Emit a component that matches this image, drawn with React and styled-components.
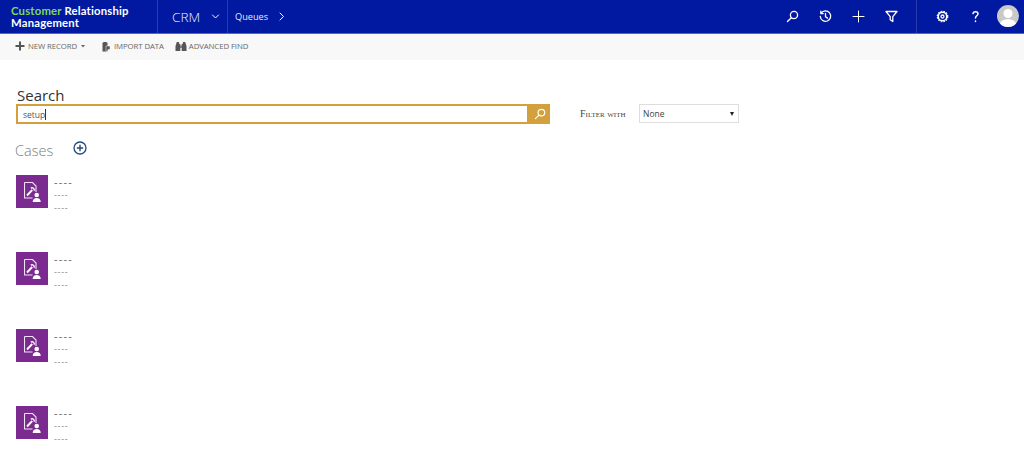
import React from "react";
import styled, { createGlobalStyle } from "styled-components";

const Global = createGlobalStyle`
  html, body { margin: 0; padding: 0; background: #fff; }
  body { font-family: "Open Sans", "Noto Sans", sans-serif; overflow: hidden; }
`;
const Page = styled.div`
  width: 1024px; height: 460px; overflow: hidden; display: flex; flex-direction: column;
`;
const NavBar = styled.header`
  height: 33px; flex: none; display: flex; align-items: stretch; background: #0019a0;
  border-bottom: 1px solid #5566c4; color: #fff;
`;
const Logo = styled.div`
  width: 146px; padding: 5px 0 0 11px; border-right: 1px solid #2a3bb0;
  font: 700 11.3px/11.5px "Lato", sans-serif; letter-spacing: 0.2px; white-space: nowrap; color: #fff;
`;
const LogoGreen = styled.span`color: #7ed957;`;
const AppSwitch = styled.div`
  width: 70px; display: flex; align-items: center; padding-left: 14px; box-sizing: border-box;
  gap: 11px; border-right: 1px solid #2a3bb0; font-size: 13.5px; font-weight: 300; color: #eef1fc;
`;
const Crumb = styled.div`
  display: flex; align-items: center; gap: 9px; padding-left: 7px; font-size: 9.2px; color: #e6eafa;
`;
const NavRight = styled.div`margin-left: auto; display: flex; align-items: center; height: 100%;`;
const NavGroup = styled.div`
  display: flex; align-items: center; height: 100%; gap: ${p => p.$gap}px; padding: ${p => p.$pad};
  border-right: ${p => p.$line ? "1px solid #2a3bb0" : "none"};
`;
const Avatar = styled.div`
  width: 22px; height: 22px; border-radius: 50%; background: #c9c9c9; overflow: hidden; margin: -1px 0 0 -5px;
`;
const Toolbar = styled.div`
  height: 26px; flex: none; background: #f8f8f8; display: flex; align-items: center; padding: 0 0 2px 15px;
  font-size: 7.8px; color: #666; box-sizing: border-box;
`;
const ToolItem = styled.div`
  display: flex; align-items: center; gap: ${p => p.$gap ?? 2}px; margin-right: ${p => p.$mr ?? 0}px;
  white-space: nowrap; letter-spacing: -0.1px; opacity: 0.99;
`;
const Main = styled.main`padding: 27px 0 0 16px; flex: 1;`;
const SearchTitle = styled.h1`
  margin: 0 0 0 1px; font-weight: 400; font-size: 15px; line-height: 16px; color: #333;
`;
const SearchRow = styled.div`display: flex; align-items: center; margin-top: 1px;`;
const SearchBox = styled.div`
  width: 513px; height: 20px; box-sizing: border-box; border: 2px solid #d2a03c; display: flex; align-items: center;
  padding-left: 5px; font-size: 8.5px; color: #555; background: #fff;
`;
const Caret = styled.span`width: 1px; height: 11px; background: #333;`;
const SearchButton = styled.div`
  width: 21px; height: 20px; background: #d2a03c; display: flex; align-items: center; justify-content: center;
`;
const FilterLabel = styled.span`
  margin: 0 0 1px 30px; width: 59px; font: 400 10px "Liberation Serif", serif; font-variant: small-caps; color: #444;
  white-space: nowrap;
`;
const SelectBox = styled.div`
  width: 100px; height: 19px; box-sizing: border-box; border: 1px solid #ddd; display: flex; align-items: center;
  justify-content: space-between; padding: 0 4px 0 3px; font-size: 8.5px; color: #444; margin-bottom: 1px;
`;
const Arrow = styled.span`
  width: 0; height: 0; border-left: 2.5px solid transparent; border-right: 2.5px solid transparent; border-top: 4px solid #222;
`;
const SectionHead = styled.div`display: flex; align-items: flex-start; margin: 15px 0 0 -1px; height: 36px;`;
const SectionTitle = styled.h2`
  margin: 1px 0 0; width: 58px; font-weight: 300; font-size: 14.5px; line-height: 22px; color: #7b7b7b;
`;
const PlusWrap = styled.div`margin-top: 2px; height: 15px; display: flex;`;
const Row = styled.div`display: flex; height: 77px; align-items: flex-start;`;
const Tile = styled.div`
  width: 32px; height: 33px; background: #7b2a90; display: flex; align-items: center; justify-content: center; flex: none;
`;
const Lines = styled.div`margin: -1px 0 0 6px; display: flex; flex-direction: column;`;
const Dash = styled.span`
  font-size: ${p => p.$big ? 11 : 9}px; line-height: ${p => p.$big ? 15 : 12.5}px; color: ${p => p.$big ? "#666" : "#888"};
  letter-spacing: ${p => p.$big ? 1.2 : 0.7}px;
`;

const White = { fill: "none", stroke: "#fff", strokeWidth: 1.3, strokeLinecap: "round", strokeLinejoin: "round" };

const SearchGlyph = ({ s = 13 }) => (
  <svg width={s} height={s} viewBox="0 0 13 13" {...White}>
    <circle cx="8" cy="5" r="3.6" /><path d="M5.3 7.7 1.5 11.5" />
  </svg>
);
const Chevron = ({ d }) => <svg width="9" height="9" viewBox="0 0 9 9" {...White} strokeWidth="1"><path d={d} /></svg>;
const CaseIcon = () => (
  <svg width="17" height="20" viewBox="0 0 17 20">
    <path d="M.5.5h8l3.500 3.500v6M.5.5v15.500h8" fill="none" stroke="#f0e4f3" strokeWidth="1.1" />
    <path d="M3 13.500 8.200 8" stroke="#fff" strokeWidth="1.9" />
    <path d="M6.800 6.200a2.200 2.200 0 0 1 3.300 2.600" stroke="#fff" strokeWidth="1.4" fill="none" />
    <circle cx="12.700" cy="13" r="2.300" fill="#fff" />
    <path d="M8.700 20c0-2.800 1.600-4 4-4s4 1.200 4 4z" fill="#fff" />
  </svg>
);
const Item = () => (
  <Row>
    <Tile><CaseIcon /></Tile>
    <Lines><Dash $big>----</Dash><Dash>----</Dash><Dash>----</Dash></Lines>
  </Row>
);

export default function App() {
  return (
    <Page>
      <Global />
      <NavBar>
        <Logo><LogoGreen>Customer</LogoGreen> Relationship<br />Management</Logo>
        <AppSwitch>CRM <Chevron d="M1.5 3 4.5 6 7.5 3" /></AppSwitch>
        <Crumb>Queues <Chevron d="M3 1 6.5 4.5 3 8" /></Crumb>
        <NavRight>
          <NavGroup $gap={20} $pad="0 18px 0 0" $line>
            <SearchGlyph />
            <svg width="13" height="13" viewBox="0 0 13 13" {...White}>
              <path d="M2.2 3.2A5.2 5.2 0 1 1 1.3 6.5M1.8 1.2v2.4h2.4M6.5 3.5v3.2l2 1.4" />
            </svg>
            <svg width="13" height="13" viewBox="0 0 13 13" {...White} strokeWidth="1"><path d="M6.5 1v11M1 6.5h11" /></svg>
            <svg width="13" height="13" viewBox="0 0 13 13" {...White}><path d="M1 1.5h11L7.8 6.6v4.9L5.2 9.8V6.6z" /></svg>
          </NavGroup>
          <NavGroup $gap={20} $pad="0 5px 0 19px">
            <svg width="13" height="13" viewBox="0 0 13 13" {...White}>
              <circle cx="6.5" cy="6.5" r="1.5" />
              <circle cx="6.5" cy="6.5" r="4.3" strokeWidth="1.6" />
              <circle cx="6.5" cy="6.5" r="5.3" strokeWidth="1.1" strokeDasharray="1.6 1.2" strokeLinecap="butt" />
            </svg>
            <svg width="13" height="13" viewBox="0 0 13 13" {...White} strokeWidth="1.5">
              <path d="M4 3.6C4.3 1 9 1 9 3.8c0 2-2.5 2-2.5 4.2" /><path d="M6.5 11v.4" />
            </svg>
            <Avatar>
              <svg width="22" height="22" viewBox="0 0 22 22">
                <circle cx="11" cy="8.5" r="4.5" fill="#fff" />
                <path d="M2.5 22c0-5.5 3.2-7.7 8.5-7.7s8.5 2.2 8.5 7.7z" fill="#fff" />
              </svg>
            </Avatar>
          </NavGroup>
        </NavRight>
      </NavBar>
      <Toolbar>
        <ToolItem $mr={15} $gap={3}>
          <svg width="10" height="10" viewBox="0 0 10 10"><path d="M5 .5v9M.5 5h9" stroke="#555" strokeWidth="2" /></svg>
          NEW RECORD
          <svg width="6" height="6" viewBox="0 0 6 6"><path d="M1 2h4L3 4.5z" fill="#666" /></svg>
        </ToolItem>
        <ToolItem $mr={11}>
          <svg width="11" height="11" viewBox="0 0 11 11">
            <path d="M1.5 2C1.5 .5 6.5 .5 6.5 2V10.500H1.500z" fill="#555" /><path d="M5 5h4v3.500H7V10H5z" fill="#555" stroke="#f8f8f8" strokeWidth=".5" />
          </svg>
          IMPORT DATA
        </ToolItem>
        <ToolItem>
          <svg width="12" height="11" viewBox="0 0 12 11">
            <path d="M1.800 1h2.200l.3 2h1v7H.5V5zM8 1h2.200l1.300 4v5H6.700V3h1z" fill="#555" />
            <path d="M5.300 4.500h1.400v2.500H5.300z" fill="#555" />
          </svg>
          ADVANCED FIND
        </ToolItem>
      </Toolbar>
      <Main>
        <SearchTitle>Search</SearchTitle>
        <SearchRow>
          <SearchBox>setup<Caret /></SearchBox>
          <SearchButton><SearchGlyph s={12} /></SearchButton>
          <FilterLabel>Filter with</FilterLabel>
          <SelectBox>None<Arrow /></SelectBox>
        </SearchRow>
        <SectionHead>
          <SectionTitle>Cases</SectionTitle>
          <PlusWrap>
            <svg width="14" height="14" viewBox="0 0 14 14" fill="none" stroke="#24477c">
              <circle cx="7" cy="7" r="6" strokeWidth="1.3" /><path d="M7 3.800v6.400M3.800 7h6.400" strokeWidth="1.4" />
            </svg>
          </PlusWrap>
        </SectionHead>
        <Item /><Item /><Item /><Item />
      </Main>
    </Page>
  );
}
